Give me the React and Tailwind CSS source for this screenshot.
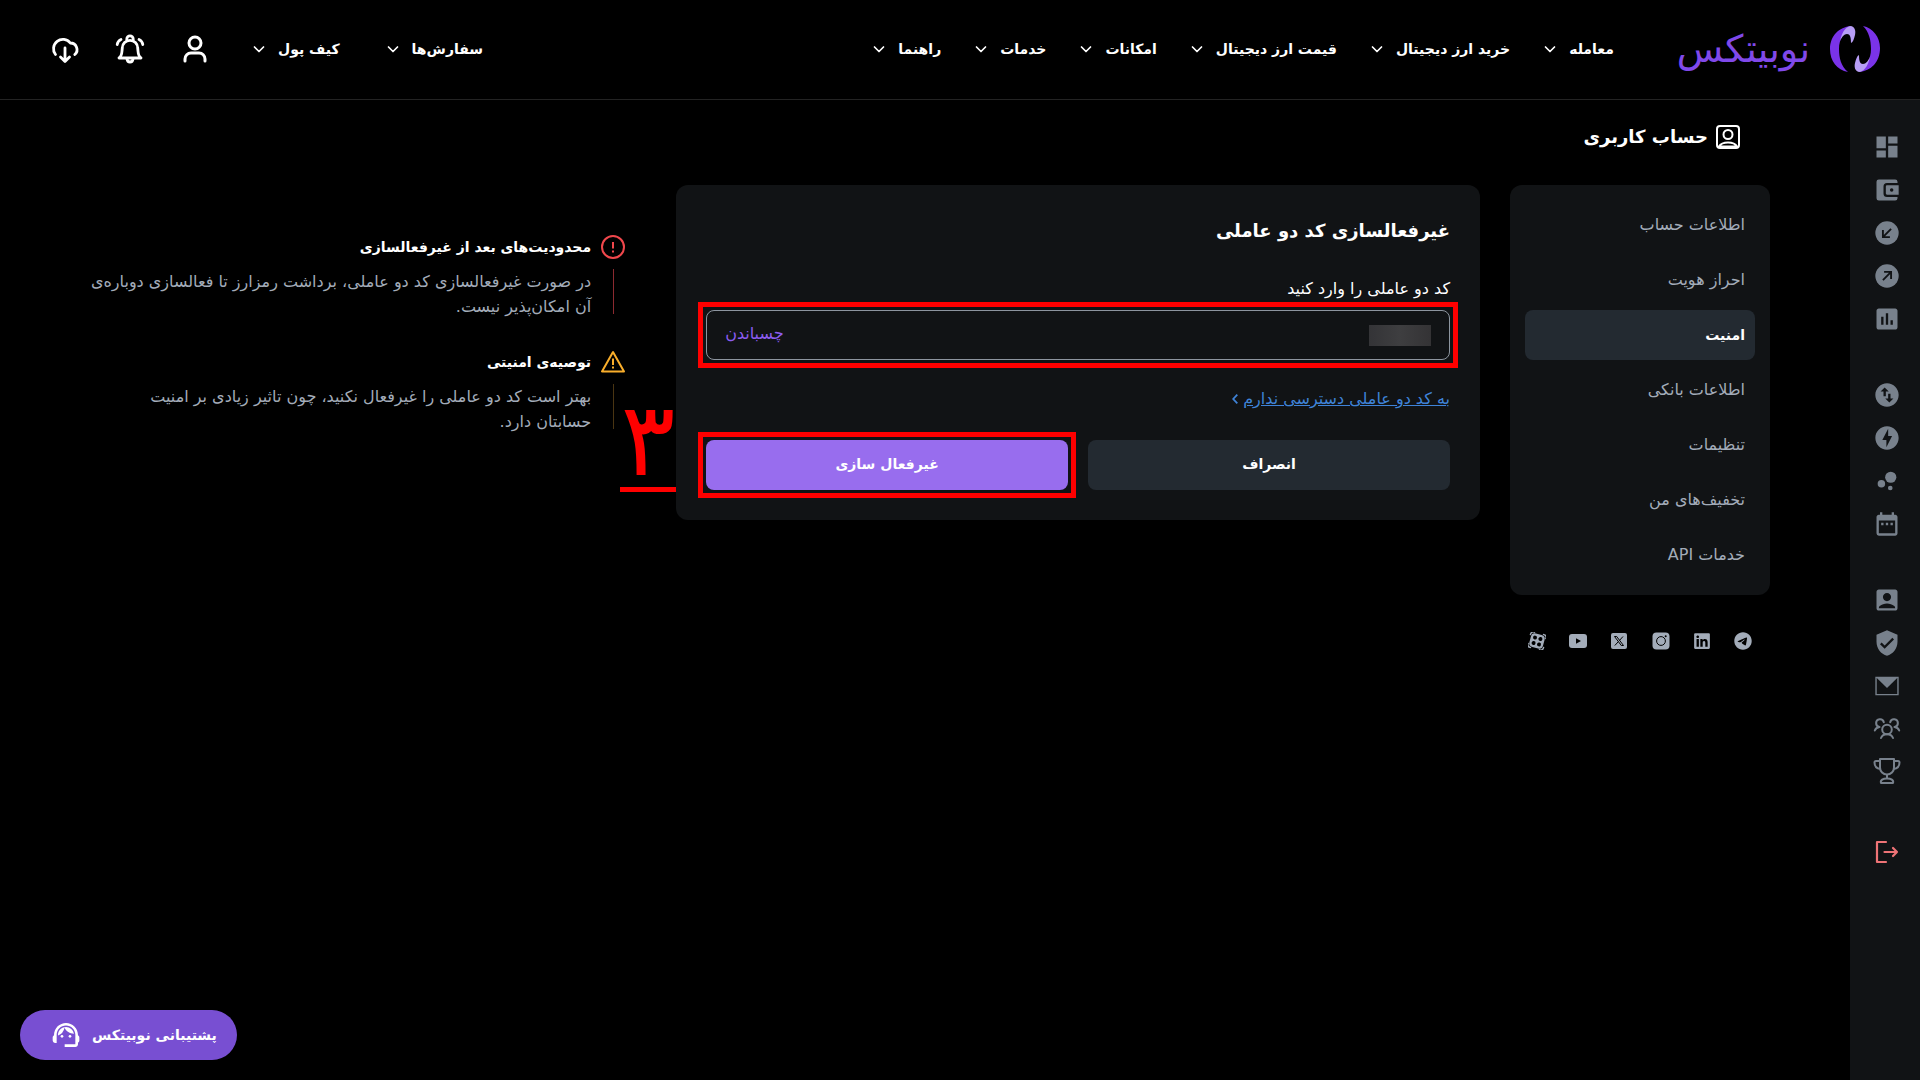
import React, { useState } from 'react';
import {
    MdDashboard, MdSwapVerticalCircle, MdOfflineBolt, MdBubbleChart, MdDateRange,
    MdAccountBox, MdVerifiedUser, MdAssessment, MdSupportAgent
} from "react-icons/md";
import { FaTelegram, FaLinkedin } from "react-icons/fa6";

// Header menus
const mainMenu = ["معامله", "خرید ارز دیجیتال", "قیمت ارز دیجیتال", "امکانات", "خدمات", "راهنما"];
const userMenu = ["سفارش‌ها", "کیف پول"];

const accountMenu = [
    "اطلاعات حساب",
    "احراز هویت",
    "امنیت",
    "اطلاعات بانکی",
    "تنظیمات",
    "تخفیف‌های من",
    "خدمات API"
];

const Chevron = () => (
    <svg width="14" height="14" viewBox="0 0 14 14" fill="none" stroke="currentColor" strokeWidth="1.7" strokeLinecap="round" strokeLinejoin="round">
        <path d="M2.500 5 7 9.500 11.500 5" />
    </svg>
);

const LogoMark = () => (
    <svg width="50" height="48" viewBox="0 0 50 48">
        <path d="M21 1C9 2 0 11 0 24c0 12 7 21 18 23-7-6-9-14-9-23C9 14 14 6 21 1Z" fill="#7a33e8" />
        <path d="M10 16C12 6 17 1 21 1c4 1 5 5 4 9-1 4-2 7-4 8 0-6-1-9-4-9-3 0-5 3-7 7Z" fill="#b79df5" />
        <path d="M33 1c10 2 17 11 17 22 0 14-9 23-21 24 7-5 12-13 12-23 0-9-2-17-8-23Z" fill="#7a33e8" />
        <path d="M40 32c-2 10-7 15-11 15-4-1-5-5-4-9 1-4 2-7 4-8 0 6 1 9 4 9 3 0 5-3 7-7Z" fill="#b79df5" />
    </svg>
);

const UserIcon = () => (
    <svg width="30" height="30" viewBox="0 0 30 30" fill="none" stroke="currentColor" strokeWidth="3" strokeLinecap="round">
        <circle cx="15" cy="9" r="6" />
        <path d="M5 27v-2a6 6 0 0 1 6-6h8a6 6 0 0 1 6 6v2" />
    </svg>
);

const BellIcon = () => (
    <svg width="30" height="30" viewBox="0 0 30 30" fill="none" stroke="currentColor" strokeWidth="2.8" strokeLinecap="round" strokeLinejoin="round">
        <path d="M4 24h22c-2.200-1.600-2.800-4-3-7l-.300-3a7.700 7.700 0 0 0-15.400 0L7 17c-.200 3-.800 5.400-3 7Z" />
        <path d="M11.800 6V5a3.200 3.200 0 0 1 6.400 0v1M12 25c.500 4 5.500 4 6 0" />
        <path d="M6 5.500C3.800 6.500 2.600 8 2.200 10.500M24 5.500c2.200 1 3.400 2.500 3.800 5" />
    </svg>
);

const CloudIcon = () => (
    <svg width="30" height="30" viewBox="0 0 30 30" fill="none" stroke="currentColor" strokeWidth="2.8" strokeLinecap="round" strokeLinejoin="round">
        <path d="M5.500 20.500A9.300 9.300 0 1 1 20.300 9a6.600 6.600 0 0 1 4.500 11.500" />
        <path d="M15 14v13M10.500 23l4.500 4.500 4.500-4.500" />
    </svg>
);

const WalletIcon = () => (
    <svg width="28" height="28" viewBox="0 0 24 24" fill="currentColor">
        <path d="M5 3h14a2 2 0 0 1 2 2v1h-9a3 3 0 0 0-3 3v6a3 3 0 0 0 3 3h9v1a2 2 0 0 1-2 2H5a2 2 0 0 1-2-2V5a2 2 0 0 1 2-2Z" />
        <path fillRule="evenodd" d="M12 8h10v8H12a1 1 0 0 1-1-1V9a1 1 0 0 1 1-1Zm4 2.500a1.500 1.500 0 1 0 0 3 1.500 1.500 0 0 0 0-3Z" />
    </svg>
);

const ArrowCircle = ({ up }) => (
    <svg width="28" height="28" viewBox="0 0 24 24">
        <circle cx="12" cy="12" r="10" fill="currentColor" />
        <path d={up ? "M8.500 15.500l7-7M9.500 8.500h6v6" : "M15.500 8.500l-7 7M14.500 15.500h-6v-6"} fill="none" stroke="#111315" strokeWidth="1.6" />
    </svg>
);

const MailIcon = () => (
    <svg width="28" height="28" viewBox="0 0 24 24">
        <path d="M2.600 4.600h18.800v14.800H2.600Z" fill="none" stroke="currentColor" strokeWidth="1.2" />
        <path d="M2.600 4.600h18.800L12 13.700Z" fill="currentColor" />
    </svg>
);

const GroupIcon = () => (
    <svg width="28" height="28" viewBox="0 0 28 28" fill="none" stroke="currentColor" strokeWidth="2" strokeLinecap="round">
        <circle cx="14" cy="14.500" r="4.800" />
        <path d="M8 23c1-2.500 3-3.700 6-3.700s5 1.200 6 3.700" />
        <path d="M6.500 12a3.900 3.900 0 1 1 4.300-4.800M1.800 15.500c.7-2 2.200-3.200 4.700-3.500M21.500 12a3.900 3.900 0 1 0-4.300-4.800M26.200 15.500c-.7-2-2.200-3.200-4.700-3.500" />
    </svg>
);

const TrophyIcon = () => (
    <svg width="28" height="28" viewBox="0 0 28 28" fill="none" stroke="currentColor" strokeWidth="2" strokeLinejoin="round">
        <path d="M7 1h14v8.500a7 7 0 0 1-14 0Z" />
        <path d="M7 3H3c-1 0-1.500.5-1.500 1.500 0 3.500 2 6 6 6.500M21 3h4c1 0 1.500.5 1.500 1.500 0 3.500-2 6-6 6.500M14 16v4" />
        <path d="M8 25c-1-3 2-4.500 6-4.500s7 1.500 6 4.500Z" />
    </svg>
);

const LogoutIcon = () => (
    <svg width="28" height="28" viewBox="0 0 28 28" fill="none" stroke="currentColor" strokeWidth="2.2" strokeLinecap="round" strokeLinejoin="round">
        <path d="M13 4H4v20h9M11.500 14H24M20 10l4 4-4 4" />
    </svg>
);

const AccountIcon = () => (
    <svg width="24" height="24" viewBox="0 0 24 24" fill="none" stroke="currentColor" strokeWidth="2">
        <rect x="1" y="1" width="22" height="22" rx="3" />
        <circle cx="12" cy="9.500" r="4.500" />
        <path d="M3 21.500c2-3.500 5-4 9-4s7 .5 9 4Z" />
    </svg>
);

const InstagramIcon = () => (
    <svg width="18" height="18" viewBox="0 0 18 18">
        <rect x="0.5" y="0.5" width="17" height="17" rx="4" fill="currentColor" />
        <circle cx="9" cy="9" r="4.4" fill="none" stroke="#000" strokeWidth="1" />
        <circle cx="13.7" cy="4.3" r="1" fill="#000" />
    </svg>
);

const XIcon = () => (
    <svg width="18" height="18" viewBox="0 0 18 18">
        <rect x="1" y="1" width="16" height="16" rx="2" fill="currentColor" />
        <path d="M4.500 4.500h2.200l6.800 9h-2.200ZM13 4.500l-3.600 4M8.300 9.700l-3.500 3.800" fill="none" stroke="#000" strokeWidth="1" />
    </svg>
);

const YoutubeIcon = () => (
    <svg width="18" height="18" viewBox="0 0 18 18">
        <rect x="0" y="2" width="18" height="14" rx="3" fill="currentColor" />
        <path d="M7 6.200v5.600L12 9Z" fill="#000" />
    </svg>
);

const AparatIcon = () => (
    <svg width="18" height="18" viewBox="0 0 18 18">
        <g transform="rotate(15 9 9)">
            <path d="M1 5V4a3 3 0 0 1 3-3h1M13 1h1a3 3 0 0 1 3 3v1M17 13v1a3 3 0 0 1-3 3h-1M5 17H4a3 3 0 0 1-3-3v-1" fill="none" stroke="currentColor" strokeWidth="1.4" />
            <rect x="2" y="2" width="14" height="14" rx="4" fill="currentColor" />
            <circle cx="6.2" cy="6.2" r="2" fill="#000" />
            <circle cx="11.8" cy="6.2" r="2" fill="#000" />
            <circle cx="6.2" cy="11.8" r="2" fill="#000" />
            <circle cx="11.8" cy="11.8" r="2" fill="#000" />
        </g>
    </svg>
);

const AlertCircle = () => (
    <svg width="24" height="24" viewBox="0 0 24 24" fill="none" stroke="#f0474c" strokeWidth="2">
        <circle cx="12" cy="12" r="11" />
        <path d="M12 7v6.500M12 15.500v2" />
    </svg>
);

const AlertTriangle = () => (
    <svg width="24" height="24" viewBox="0 0 24 24" fill="none" stroke="#f9ae2b" strokeWidth="2" strokeLinejoin="round">
        <path d="M12 2 1 21.500h22Z" />
        <path d="M12 8.500v6.500M12 16.500v2" />
    </svg>
);

const sideGroups = [
    [
        { label: "داشبورد", icon: <MdDashboard size={28} /> },
        { label: "کیف پول", icon: <WalletIcon /> },
        { label: "واریز", icon: <ArrowCircle /> },
        { label: "برداشت", icon: <ArrowCircle up /> },
        { label: "گزارش", icon: <MdAssessment size={28} /> }
    ],
    [
        { label: "معامله", icon: <MdSwapVerticalCircle size={28} /> },
        { label: "معامله سریع", icon: <MdOfflineBolt size={28} /> },
        { label: "استخر", icon: <MdBubbleChart size={28} /> },
        { label: "تاریخچه", icon: <MdDateRange size={28} /> }
    ],
    [
        { label: "حساب کاربری", icon: <MdAccountBox size={28} /> },
        { label: "امنیت", icon: <MdVerifiedUser size={28} /> },
        { label: "پیام‌ها", icon: <MailIcon /> },
        { label: "معرفی دوستان", icon: <GroupIcon /> },
        { label: "جوایز", icon: <TrophyIcon /> }
    ]
];

const socials = [
    { label: "تلگرام", icon: <FaTelegram size={18} /> },
    { label: "لینکدین", icon: <FaLinkedin size={18} /> },
    { label: "اینستاگرام", icon: <InstagramIcon /> },
    { label: "ایکس", icon: <XIcon /> },
    { label: "یوتیوب", icon: <YoutubeIcon /> },
    { label: "آپارات", icon: <AparatIcon /> }
];

const MenuLink = ({ text }) => (
    <a href="#" className="flex items-center gap-3 whitespace-nowrap">
        {text}
        <Chevron />
    </a>
);

const Header = () => (
    <header className="flex h-[100px] items-center border-b border-[#232323] px-10 pb-0.5 text-sm font-bold text-white">
        <a href="#" className="flex items-center gap-5">
            <LogoMark />
            <span className="text-[38px]/[48px] font-normal text-[#8049ea]">نوبیتکس</span>
        </a>
        <nav className="mr-[63px] flex items-center gap-[33px]">
            {mainMenu.map((text) => <MenuLink key={text} text={text} />)}
        </nav>
        <div className="mr-auto flex items-center">
            <nav className="flex items-center gap-[46px]">
                {userMenu.map((text) => <MenuLink key={text} text={text} />)}
            </nav>
            <div className="mr-[42px] flex items-center gap-[35px] pl-[10px]">
                <button type="button" aria-label="حساب کاربری"><UserIcon /></button>
                <button type="button" aria-label="اعلان‌ها"><BellIcon /></button>
                <button type="button" aria-label="دانلود"><CloudIcon /></button>
            </div>
        </div>
    </header>
);

const SideBar = () => (
    <aside className="flex w-[70px] shrink-0 flex-col items-start gap-12 bg-[#111315] pt-[33px] pr-[19px] text-[#78818c]">
        {sideGroups.map((group, index) => (
            <div key={index} className="flex flex-col gap-[15px]">
                {group.map((item) => (
                    <a href="#" key={item.label} aria-label={item.label}>{item.icon}</a>
                ))}
            </div>
        ))}
        <button type="button" aria-label="خروج" className="mt-1 text-[#ee7376]"><LogoutIcon /></button>
    </aside>
);

const Tip = ({ icon, title, line, children }) => (
    <div className="grid grid-cols-[24px_1fr] gap-[10px]">
        {icon}
        <h3 className="text-sm/6 font-bold text-white">{title}</h3>
        <span className={`h-[45px] w-px justify-self-center ${line}`}></span>
        <p className="text-base/[25px] text-[#a3acb9]">{children}</p>
    </div>
);

const App = () => {
    const [code, setCode] = useState("");

    const handlePaste = async () => {
        const text = await navigator.clipboard.readText();
        setCode(text);
    };

    return (
        <div dir="rtl" className="flex min-h-screen flex-col bg-black font-['DejaVu_Sans',sans-serif]">
            <Header />

            <div className="flex flex-1">
                <SideBar />

                <main className="min-w-0 flex-1 px-20 pt-[22px]">
                    <div className="mr-[30px] flex h-[30px] items-center gap-2 text-white">
                        <AccountIcon />
                        <h1 className="text-lg font-bold">حساب کاربری</h1>
                    </div>

                    <div className="mt-[33px] grid grid-cols-[260px_71fr_50fr] items-start gap-[30px]">
                        {/* Account menu */}
                        <div>
                            <nav className="flex flex-col gap-[5px] rounded-xl bg-[#111315] p-[15px]">
                                {accountMenu.map((text) => (
                                    <a
                                        href="#"
                                        key={text}
                                        className={`flex h-[50px] items-center rounded-lg px-[10px] ${text === "امنیت" ? "bg-[#232a31] text-sm font-bold text-white" : "text-base text-[#a3acb9]"}`}
                                    >
                                        {text}
                                    </a>
                                ))}
                            </nav>
                            <div className="mt-[37px] flex justify-between px-[18px] text-[#a3acb9]">
                                {socials.map((item) => (
                                    <a href="#" key={item.label} aria-label={item.label}>{item.icon}</a>
                                ))}
                            </div>
                        </div>

                        {/* Disable form */}
                        <form className="relative z-10 rounded-xl bg-[#111315] p-[30px]" onSubmit={(e) => e.preventDefault()}>
                            <h2 className="text-lg/8 font-bold text-white">غیرفعالسازی کد دو عاملی</h2>
                            <label htmlFor="code" className="mt-[30px] block text-base/6 text-white">کد دو عاملی را وارد کنید</label>
                            <div className="relative mt-[9px] flex h-[50px] items-center rounded-lg border border-[#8d959f] px-[18px]">
                                <span className="h-[21px] w-[62px] bg-linear-to-r from-[#343437] via-[#3e3e40] to-[#343335]"></span>
                                <input
                                    type="text"
                                    id="code"
                                    name="code"
                                    value={code}
                                    onChange={(e) => setCode(e.target.value)}
                                    className="min-w-0 flex-1 text-base text-white outline-none"
                                />
                                <button type="button" onClick={handlePaste} className="pb-0.5 text-base text-[#8b5cf0]">چسباندن</button>
                                <span className="pointer-events-none absolute -inset-[9px] border-5 border-[#ff0000]"></span>
                            </div>
                            <a href="#" className="mt-[27px] flex items-center gap-[5px] text-base/6 text-[#3f83d8]">
                                <span className="underline">به کد دو عاملی دسترسی ندارم</span>
                                <svg width="6" height="10" viewBox="0 0 6 10" fill="none" stroke="currentColor" strokeWidth="1.8"><path d="M5.300 0.700 1.200 5l4.100 4.300" /></svg>
                            </a>
                            <div className="mt-[29px] grid grid-cols-2 gap-5 text-sm font-bold text-white">
                                <button type="button" className="h-[50px] rounded-lg bg-[#232a31] pb-0.5">انصراف</button>
                                <div className="relative">
                                    <button type="submit" className="h-[50px] w-full rounded-lg bg-[#986dee] pb-0.5">غیرفعال سازی</button>
                                    <span className="pointer-events-none absolute -inset-2 border-5 border-[#ff0000]"></span>
                                </div>
                            </div>
                        </form>

                        {/* Tips */}
                        <div className="relative flex flex-col gap-[31px] pr-[21px] pt-[50px]">
                            <Tip icon={<AlertCircle />} title="محدودیت‌های بعد از غیرفعالسازی" line="bg-[#8c2a30]">
                                در صورت غیرفعالسازی کد دو عاملی، برداشت رمزارز تا فعالسازی دوباره‌ی
                                <br />
                                آن امکان‌پذیر نیست.
                            </Tip>
                            <Tip icon={<AlertTriangle />} title="توصیه‌ی امنیتی" line="bg-[#4a3512]">
                                بهتر است کد دو عاملی را غیرفعال نکنید، چون تاثیر زیادی بر امنیت
                                <br />
                                حسابتان دارد.
                            </Tip>
                            <span className="absolute -right-[30px] top-[207px] flex h-[100px] w-14 items-center justify-center border-b-5 border-[#ff0000] text-[102px] text-[#ff0000]">۳</span>
                        </div>
                    </div>
                </main>
            </div>

            <button type="button" className="fixed bottom-5 left-5 flex h-[50px] items-center gap-[10px] rounded-full bg-[#784fd2] pl-[30px] pr-5 text-sm font-bold text-white">
                پشتیبانی نوبیتکس
                <MdSupportAgent size={32} />
            </button>
        </div>
    );
};

export default App;
